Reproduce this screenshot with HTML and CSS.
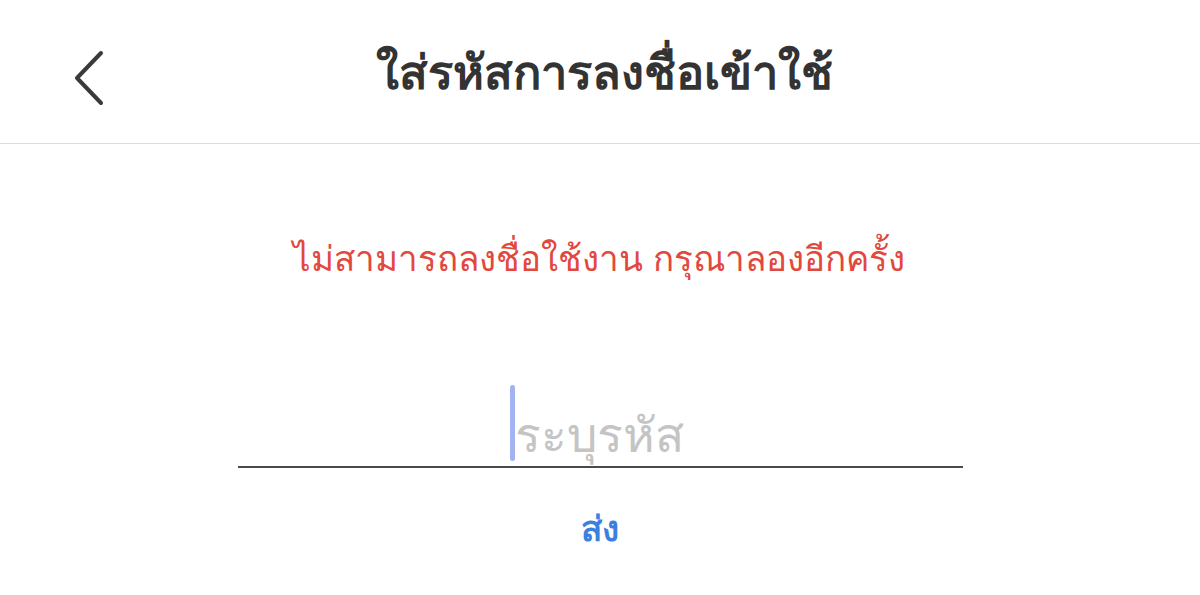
FILE: index.html
```html
<!DOCTYPE html>
<html lang="th">
<head>
<meta charset="utf-8">
<title>ใส่รหัสการลงชื่อเข้าใช้</title>
<link rel="stylesheet" href="styles.css">
</head>
<body>
<header class="topbar">
  <button class="back" aria-label="back">
    <svg width="40" height="60" viewBox="0 0 40 60"><path d="M31 4 L7 29 L31 54" fill="none" stroke="#3a3a3a" stroke-width="4" stroke-linecap="round" stroke-linejoin="round"/></svg>
  </button>
  <h1 class="title">ใส่รหัสการลงชื่อเข้าใช้</h1>
</header>
<main class="content">
  <p class="error">ไม่สามารถลงชื่อใช้งาน กรุณาลองอีกครั้ง</p>
  <div class="field">
    <div class="inputline">
      <span class="caret"></span><span class="placeholder">ระบุรหัส</span>
    </div>
  </div>
  <button class="submit">ส่ง</button>
</main>
</body>
</html>
```
FILE: styles.css
```css
html, body {
  margin: 0;
  padding: 0;
  background: #ffffff;
  font-family: "Noto Sans", "DejaVu Sans", sans-serif;
}
.topbar {
  position: relative;
  height: 143px;
  border-bottom: 1px solid #dcdcdc;
  display: flex;
  align-items: center;
  justify-content: center;
}
.back {
  position: absolute;
  left: 70px;
  top: 49px;
  background: none;
  border: 0;
  padding: 0;
  display: flex;
}
.title {
  margin: 0;
  font-size: 47px;
  font-weight: 700;
  color: #333333;
  padding-top: 2px;
  padding-left: 8px;
}
.content {
  display: flex;
  flex-direction: column;
  align-items: center;
}
.error {
  margin: 86px 0 0;
  font-size: 35px;
  color: #e2483d;
  line-height: 56px;
  padding-right: 2px;
}
.field {
  margin-top: 95px;
  width: 725px;
  border-bottom: 2px solid #4a4a4a;
}
.inputline {
  height: 85px;
  display: flex;
  align-items: flex-end;
  justify-content: center;
}
.caret {
  width: 5px;
  height: 76px;
  border-radius: 3px;
  background: #a3b2f0;
  margin-bottom: 5px;
}
.placeholder {
  font-size: 48px;
  line-height: 64px;
  color: #c4c4c4;
  margin-right: 6px;
}
.submit {
  margin-top: 33px;
  background: none;
  border: 0;
  padding: 0;
  font-family: inherit;
  font-size: 35px;
  font-weight: 700;
  color: #3b7fe0;
}
```
